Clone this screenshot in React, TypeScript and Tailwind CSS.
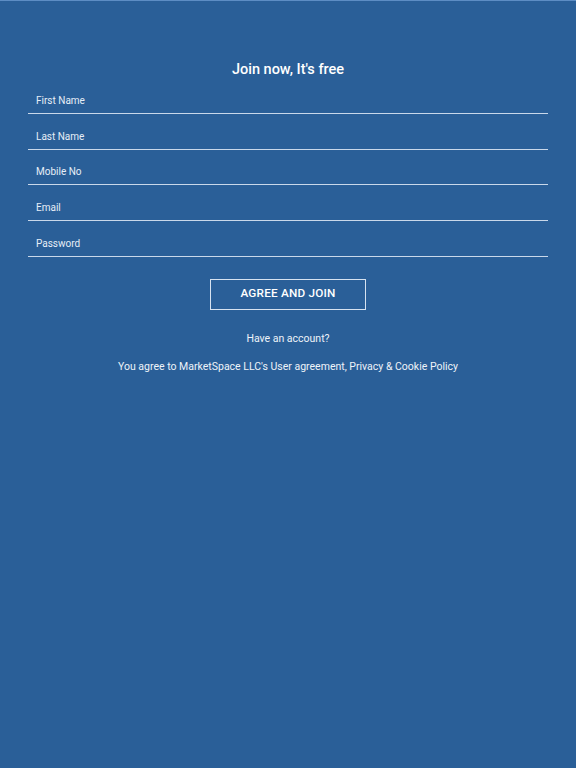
import React from 'react';

const fields = ['First Name', 'Last Name', 'Mobile No', 'Email', 'Password'];

export default function App() {
  return (
    <div
      className="min-h-[768px] w-full bg-[#2a5f98] border-t border-[#5d8dc4] text-white"
      style={{ fontFamily: 'Roboto, "Liberation Sans", sans-serif' }}
    >
      <div className="pt-[60px] px-[28px]">
        <h1 className="text-center text-[14.5px] font-medium leading-[17px]">Join now, It's free</h1>
        <div className="flex flex-col">
          {fields.map((f) => (
            <div key={f} className="h-[35.75px] border-b border-[#c9d8ea] flex items-end pl-[8px] pb-[5px]">
              <span className="text-[10px] leading-[14px] text-[#e6eef7]">{f}</span>
            </div>
          ))}
        </div>
        <div className="mt-[22px] flex justify-center">
          <button className="w-[156px] h-[31px] border border-[#d6e2f0] text-[11.75px] font-medium tracking-[0.2px] text-white">
            AGREE AND JOIN
          </button>
        </div>
        <p className="mt-[22px] text-center text-[10.5px] leading-[14px] text-[#eef3f9]">Have an account?</p>
        <p className="mt-[14px] text-center text-[10.5px] leading-[14px] text-[#eef3f9]">
          You agree to MarketSpace LLC's User agreement, Privacy &amp; Cookie Policy
        </p>
      </div>
    </div>
  );
}
